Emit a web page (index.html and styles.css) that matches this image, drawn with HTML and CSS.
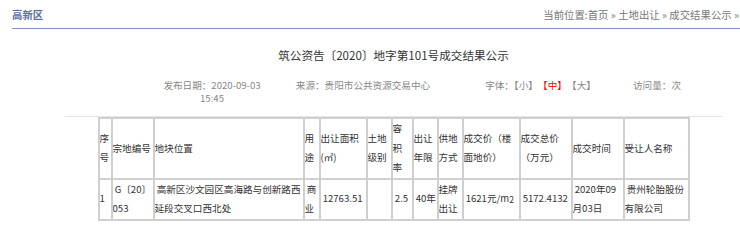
FILE: index.html
```html
<!DOCTYPE html>
<html lang="zh-CN">
<head>
<meta charset="utf-8">
<title>筑公资告〔2020〕地字第101号成交结果公示</title>
<link rel="stylesheet" href="styles.css">
</head>
<body>
<div class="topbar">
  <div class="area">高新区</div>
  <div class="crumb">当前位置:首页 » 土地出让 » 成交结果公示 »</div>
</div>
<div class="main">
  <div class="title">筑公资告〔2020〕地字第101号成交结果公示</div>
  <div class="meta">
    <div class="m1">发布日期：2020-09-03 15:45</div>
    <div class="m2">来源：贵阳市公共资源交易中心</div>
    <div class="m3">字体：<span class="fs">【小】</span><span class="fs red">【中】</span><span class="fs">【大】</span></div>
    <div class="m4">访问量：次</div>
  </div>
  <div class="tablewrap">
    <div class="grid">
      <div class="c">序号</div>
      <div class="c">宗地编号</div>
      <div class="c">地块位置</div>
      <div class="c">用途</div>
      <div class="c">出让面积(㎡)</div>
      <div class="c">土地级别</div>
      <div class="c">容积率</div>
      <div class="c">出让年限</div>
      <div class="c">供地方式</div>
      <div class="c">成交价（楼面地价）</div>
      <div class="c">成交总价（万元）</div>
      <div class="c">成交时间</div>
      <div class="c">受让人名称</div>

      <div class="c">1</div>
      <div class="c">&nbsp;G〔20〕053</div>
      <div class="c">&nbsp;高新区沙文园区高海路与创新路西延段交叉口西北处</div>
      <div class="c">&nbsp;商业</div>
      <div class="c">&nbsp;12763.51</div>
      <div class="c"></div>
      <div class="c nw">&nbsp;2.5</div>
      <div class="c nw">&nbsp;40年</div>
      <div class="c">挂牌出让</div>
      <div class="c nw">&nbsp;1621元/m<sup>2</sup></div>
      <div class="c nw">&nbsp;5172.4132</div>
      <div class="c">&nbsp;2020年09月03日</div>
      <div class="c">&nbsp;贵州轮胎股份有限公司</div>
    </div>
  </div>
</div>
</body>
</html>
```
FILE: styles.css
```css
html, body {
  margin: 0;
  padding: 0;
}
body {
  width: 740px;
  overflow: hidden;
  font-family: "Noto Sans CJK SC", "Noto Sans", sans-serif;
  font-size: 9.6px;
  color: #333;
  background: #fff;
}
.topbar {
  margin-left: 12px;
  height: 28px;
  border-bottom: 1px solid #8094c8;
  display: flex;
  justify-content: space-between;
  align-items: center;
}
.area {
  font-weight: bold;
  font-size: 10.4px;
  color: #5b6ea6;
}
.crumb {
  color: #777;
  font-size: 10.4px;
  white-space: nowrap;
  margin-right: 1px;
}
.main {
  margin-left: 65px;
  width: 657px;
}
.title {
  margin-top: 18px;
  text-align: center;
  font-size: 11.6px;
  line-height: 16px;
  color: #333;
}
.meta {
  margin-top: 16px;
  display: flex;
  padding-left: 92px;
  line-height: 13px;
  color: #888;
}
.meta > div {
  text-align: center;
}
.m1 { width: 110px; }
.m2 { width: 192px; }
.m3 { width: 168px; }
.m4 { width: 60px; }
.fs { margin-right: 5px; }
.red { color: #f00; }
.tablewrap {
  margin-top: 11px;
  border-top: 1px solid #e4e4e4;
}
.grid {
  width: 592px;
  margin: 0 auto;
  box-sizing: border-box;
  border: 1px solid #cfcfcf;
  display: grid;
  grid-template-columns: 13px 42px 150px 16px 47px 25px 21px 25px 25px 57px 52px 52px 65px;
  line-height: 19.5px;
}
.c {
  border: 1px solid #cfcfcf;
  display: flex;
  align-items: center;
  overflow: hidden;
  color: #333;
}
.nw {
  white-space: nowrap;
}
sup {
  font-size: 8.5px;
  line-height: 0;
  vertical-align: 4px;
}
```
